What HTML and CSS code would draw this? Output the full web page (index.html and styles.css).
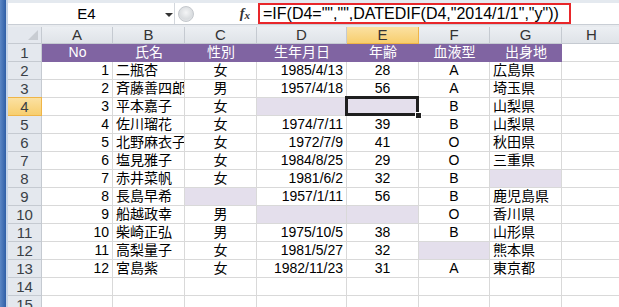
FILE: index.html
```html
<!DOCTYPE html>
<html lang="ja">
<head>
    <meta charset="UTF-8">
    <title>DATEDIF</title>
    <link rel="stylesheet" href="styles.css">
</head>
<body>
    <div class="window">
        <div class="edge"></div>
        <div class="main">
            <div class="topband"></div>

            <!-- Formula bar -->
            <div class="fbar">
                <div class="namebox">
                    <span class="cellref">E4</span>
                    <span class="arrow"></span>
                </div>
                <div class="splitter"><span class="knob"></span></div>
                <div class="fx"><i>f</i><i>x</i></div>
                <div class="formula">=IF(D4="","",DATEDIF(D4,"2014/1/1","y"))</div>
                <div class="fbar-rest"></div>
            </div>
            <div class="gap"></div>

            <!-- Sheet -->
            <div class="sheet">
                <div class="c corner"><span class="tri"></span></div>
                <div class="c ch">A</div>
                <div class="c ch">B</div>
                <div class="c ch">C</div>
                <div class="c ch">D</div>
                <div class="c ch on">E</div>
                <div class="c ch">F</div>
                <div class="c ch">G</div>
                <div class="c ch">H</div>

                <div class="c rh">1</div>
                <div class="c hd">No</div>
                <div class="c hd">氏名</div>
                <div class="c hd">性別</div>
                <div class="c hd">生年月日</div>
                <div class="c hd">年齢</div>
                <div class="c hd">血液型</div>
                <div class="c hd">出身地</div>
                <div class="c"></div>

                <div class="c rh">2</div>
                <div class="c r">1</div>
                <div class="c l">二瓶杏</div>
                <div class="c m">女</div>
                <div class="c r">1985/4/13</div>
                <div class="c m">28</div>
                <div class="c m">A</div>
                <div class="c l">広島県</div>
                <div class="c"></div>

                <div class="c rh">3</div>
                <div class="c r">2</div>
                <div class="c l">斉藤善四郎</div>
                <div class="c m">男</div>
                <div class="c r">1957/4/18</div>
                <div class="c m">56</div>
                <div class="c m">A</div>
                <div class="c l">埼玉県</div>
                <div class="c"></div>

                <div class="c rh on">4</div>
                <div class="c r">3</div>
                <div class="c l">平本嘉子</div>
                <div class="c m">女</div>
                <div class="c lv"></div>
                <div class="c lv sel"><span class="handle"></span></div>
                <div class="c m">B</div>
                <div class="c l">山梨県</div>
                <div class="c"></div>

                <div class="c rh">5</div>
                <div class="c r">4</div>
                <div class="c l">佐川瑠花</div>
                <div class="c m">女</div>
                <div class="c r">1974/7/11</div>
                <div class="c m">39</div>
                <div class="c m">B</div>
                <div class="c l">山梨県</div>
                <div class="c"></div>

                <div class="c rh">6</div>
                <div class="c r">5</div>
                <div class="c l">北野麻衣子</div>
                <div class="c m">女</div>
                <div class="c r">1972/7/9</div>
                <div class="c m">41</div>
                <div class="c m">O</div>
                <div class="c l">秋田県</div>
                <div class="c"></div>

                <div class="c rh">7</div>
                <div class="c r">6</div>
                <div class="c l">塩見雅子</div>
                <div class="c m">女</div>
                <div class="c r">1984/8/25</div>
                <div class="c m">29</div>
                <div class="c m">O</div>
                <div class="c l">三重県</div>
                <div class="c"></div>

                <div class="c rh">8</div>
                <div class="c r">7</div>
                <div class="c l">赤井菜帆</div>
                <div class="c m">女</div>
                <div class="c r">1981/6/2</div>
                <div class="c m">32</div>
                <div class="c m">B</div>
                <div class="c lv"></div>
                <div class="c"></div>

                <div class="c rh">9</div>
                <div class="c r">8</div>
                <div class="c l">長島早希</div>
                <div class="c lv"></div>
                <div class="c r">1957/1/11</div>
                <div class="c m">56</div>
                <div class="c m">B</div>
                <div class="c l">鹿児島県</div>
                <div class="c"></div>

                <div class="c rh">10</div>
                <div class="c r">9</div>
                <div class="c l">船越政幸</div>
                <div class="c m">男</div>
                <div class="c lv"></div>
                <div class="c lv"></div>
                <div class="c m">O</div>
                <div class="c l">香川県</div>
                <div class="c"></div>

                <div class="c rh">11</div>
                <div class="c r">10</div>
                <div class="c l">柴崎正弘</div>
                <div class="c m">男</div>
                <div class="c r">1975/10/5</div>
                <div class="c m">38</div>
                <div class="c m">B</div>
                <div class="c l">山形県</div>
                <div class="c"></div>

                <div class="c rh">12</div>
                <div class="c r">11</div>
                <div class="c l">高梨量子</div>
                <div class="c m">女</div>
                <div class="c r">1981/5/27</div>
                <div class="c m">32</div>
                <div class="c lv"></div>
                <div class="c l">熊本県</div>
                <div class="c"></div>

                <div class="c rh">13</div>
                <div class="c r">12</div>
                <div class="c l">宮島紫</div>
                <div class="c m">女</div>
                <div class="c r">1982/11/23</div>
                <div class="c m">31</div>
                <div class="c m">A</div>
                <div class="c l">東京都</div>
                <div class="c"></div>

                <div class="c rh">14</div>
                <div class="c"></div>
                <div class="c"></div>
                <div class="c"></div>
                <div class="c"></div>
                <div class="c"></div>
                <div class="c"></div>
                <div class="c"></div>
                <div class="c"></div>

                <div class="c rh">15</div>
                <div class="c"></div>
                <div class="c"></div>
                <div class="c"></div>
                <div class="c"></div>
                <div class="c"></div>
                <div class="c"></div>
                <div class="c"></div>
                <div class="c"></div>
            </div>
        </div>
    </div>
</body>
</html>
```

FILE: styles.css
```css
body {
    margin: 0;
    padding: 0;
    background-color: #fff;
    font-family: "Liberation Sans", "Noto Sans CJK JP", sans-serif;
    font-size: 14px;
    color: #000;
    overflow: hidden;
}

.window {
    display: flex;
    height: 307px;
    width: 619px;
    overflow: hidden;
}

/* blue frame on the left */
.edge {
    width: 6px;
    flex-shrink: 0;
    background: linear-gradient(90deg, #5b86c4, #2f5ea6);
    border-right: 2px solid #c6d4e8;
}

.main {
    flex: 1;
    min-width: 0;
    background-color: #dfe4ea;
}

.topband {
    height: 3px;
    background-color: #e4e9ef;
}

/* Formula bar */
.fbar {
    display: flex;
    height: 21px;
    background-color: #fff;
}

.namebox {
    width: 167px;
    display: flex;
    align-items: center;
    border-right: 1px solid #d3d7dd;
    box-sizing: border-box;
    position: relative;
}

.cellref {
    flex: 1;
    text-align: center;
    font-size: 15px;
}

.arrow {
    width: 0;
    height: 0;
    border-left: 4px solid transparent;
    border-right: 4px solid transparent;
    border-top: 4px solid #333;
    margin-right: 1px;
    margin-top: 2px;
}

.splitter {
    width: 25px;
    display: flex;
    align-items: center;
    padding-left: 3px;
    box-sizing: border-box;
}

.knob {
    width: 16px;
    height: 16px;
    border-radius: 50%;
    border: 1px solid #c3c7cc;
    background: radial-gradient(circle at 50% 40%, #f4f5f6 0, #d9dcdf 60%, #eef0f2 100%);
    box-sizing: border-box;
}

.fx {
    width: 58px;
    display: flex;
    justify-content: flex-end;
    align-items: center;
    padding-right: 8px;
    box-sizing: border-box;
    font-family: "Liberation Serif", serif;
    font-size: 14px;
    font-weight: bold;
    color: #333;
}

.fx i + i {
    font-size: 11px;
    margin-top: 3px;
}

.formula {
    width: 313px;
    border: 2px solid #e8262a;
    box-sizing: border-box;
    padding-left: 3px;
    font-size: 16px;
    line-height: 17px;
    white-space: nowrap;
}

.fbar-rest {
    flex: 1;
}

.gap {
    height: 3px;
    border-top: 1px solid #c9ced5;
    background-color: #e8ebef;
    box-sizing: border-box;
}

/* Sheet grid */
.sheet {
    display: grid;
    grid-template-columns: 34px 71px 72px 72px 90px 72px 71px 72px 60px;
    grid-template-rows: 17px repeat(15, 18px);
    background-color: #fff;
}

.c {
    box-sizing: border-box;
    border-right: 1px solid #d9d9d9;
    border-bottom: 1px solid #d9d9d9;
    line-height: 17px;
    white-space: nowrap;
    overflow: hidden;
}

.r {
    text-align: right;
    padding-right: 3px;
}

.l {
    padding-left: 3px;
}

.m {
    text-align: center;
}

.corner {
    background-color: #e4e8ee;
    border-right-color: #c5cad1;
    border-bottom-color: #c5cad1;
    position: relative;
}

.tri {
    position: absolute;
    right: 3px;
    bottom: 3px;
    width: 0;
    height: 0;
    border-left: 10px solid transparent;
    border-bottom: 10px solid #c8ccd2;
}

.ch {
    background: linear-gradient(#eceff3, #dfe3e8);
    border-right-color: #c5cad1;
    border-bottom-color: #c5cad1;
    text-align: center;
    color: #333;
    font-size: 15px;
    line-height: 16px;
}

.rh {
    background-color: #e4e8ee;
    border-right-color: #c5cad1;
    border-bottom-color: #c5cad1;
    text-align: center;
    color: #3a3f46;
    font-size: 15px;
}

.ch.on,
.rh.on {
    background: linear-gradient(#fbe1a2, #f7ce6e);
    border-color: #efb548;
    border-style: solid;
    border-width: 0 1px 1px 0;
}

.rh.on {
    border-top: 1px solid #efb548;
    margin-top: -1px;
    line-height: 18px;
}

.hd {
    background-color: #8064a2;
    border-right: none;
    border-bottom-color: #8064a2;
    color: #fff;
    text-align: center;
}

.lv {
    background-color: #e4dfec;
}

.sel {
    position: relative;
    overflow: visible;
}

.sel::after {
    content: "";
    position: absolute;
    left: -2px;
    top: -2px;
    right: -1px;
    bottom: -1px;
    border: 3px solid #1f1f1f;
}

.handle {
    position: absolute;
    right: -4px;
    bottom: -4px;
    width: 5px;
    height: 5px;
    background-color: #1f1f1f;
    border: 1px solid #fff;
    z-index: 2;
}
```
